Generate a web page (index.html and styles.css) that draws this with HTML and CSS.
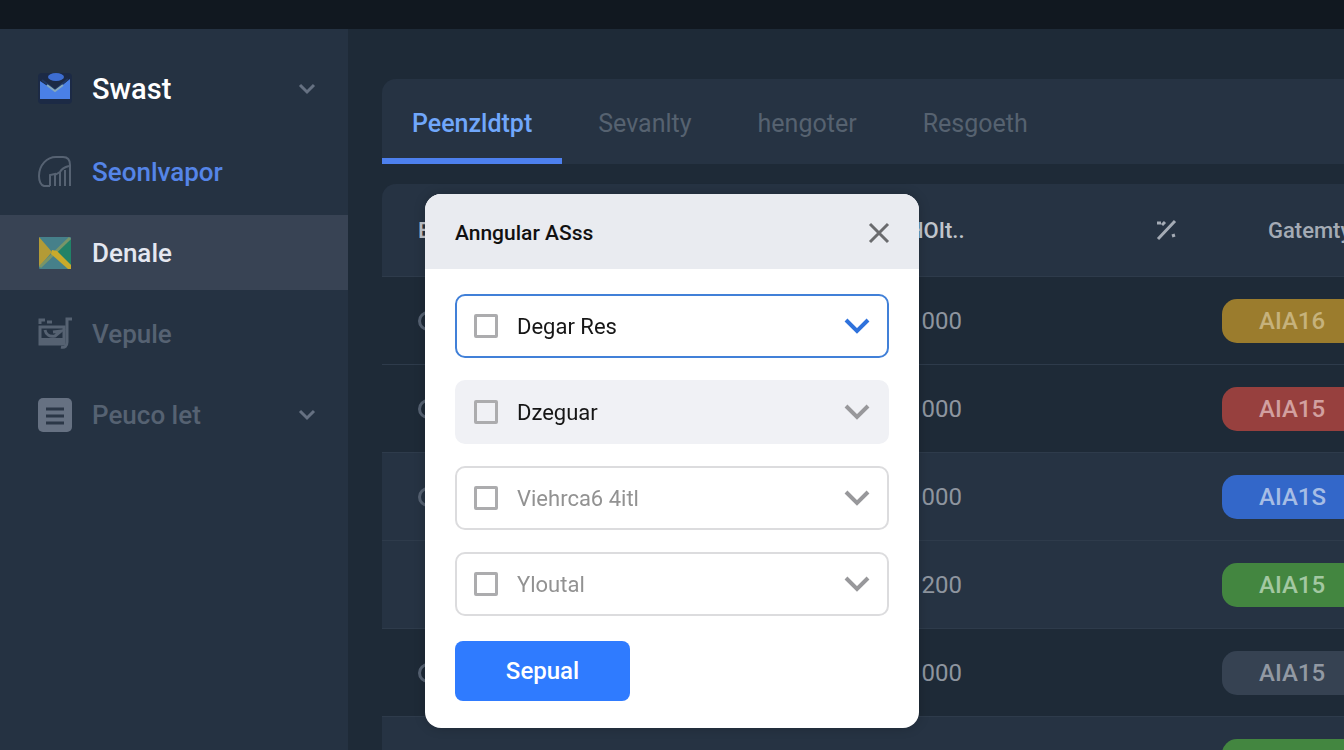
FILE: index.html
```html
<!DOCTYPE html>
<html lang="en">
<head>
    <meta charset="UTF-8">
    <meta name="viewport" content="width=device-width, initial-scale=1">
    <title>Denale</title>
    <link rel="stylesheet" href="styles.css">
</head>
<body>
    <header class="topbar"></header>

    <div class="layout">
        <nav class="sidebar">
            <a href="#" class="nav-item brand">
                <svg class="nav-icon" viewBox="0 0 34 34">
                    <rect x="0" y="1" width="34" height="31" rx="4" fill="#1c2a45"/>
                    <ellipse cx="18" cy="5" rx="8" ry="4" fill="#3d6dd0"/>
                    <path d="M2 9l15 10L32 7v20H2z" fill="#4a80e6"/>
                    <path d="M4 8l13 10L30 7" fill="none" stroke="#203763" stroke-width="2"/>
                    <path d="M9 13l8 6 8-6" fill="none" stroke="#86a9bd" stroke-width="2"/>
                </svg>
                <span>Swast</span>
                <svg class="nav-chevron" viewBox="0 0 18 18"><path d="M2 5l7 7 7-7"/></svg>
            </a>
            <a href="#" class="nav-item link">
                <svg class="nav-icon outline" viewBox="0 0 34 34">
                    <path d="M12 31H6C3 30 1 26 1 21 1 10 9 2 18 2h7c5 0 7 3 7 8v21"/>
                    <path d="M12 31V20l5-1v12M17 20l5-3v14M22 17c2-4 5-5 9-6M27 31V15"/>
                </svg>
                <span>Seonlvapor</span>
            </a>
            <a href="#" class="nav-item active">
                <svg class="nav-icon" viewBox="0 0 34 34">
                    <rect x="1" y="1" width="32" height="32" rx="1" fill="#46808a"/>
                    <path d="M1 1l13 15L1 31z" fill="#b39b36"/>
                    <path d="M33 3v26L19 16z" fill="#218267"/>
                    <path d="M2 31L32 2" stroke="#789568" stroke-width="3"/>
                    <path d="M14 14l5 1 14 14v4h-3L13 18z" fill="#c9aa2b"/>
                </svg>
                <span>Denale</span>
            </a>
            <a href="#" class="nav-item">
                <svg class="nav-icon" viewBox="0 0 34 34" fill="none" stroke="#566272">
                    <path d="M2 7V3h5M9 5h5" stroke-width="3"/>
                    <path d="M2 10h24v17H2z" stroke-width="3"/>
                    <path d="M2 24h24" stroke-width="6"/>
                    <path d="M7 13c1 5 5 7 10 6l6-5-8 1" stroke-width="3"/>
                    <path d="M34 2h-5v23c0 4-2 6-6 5" stroke-width="3"/>
                </svg>
                <span>Vepule</span>
            </a>
            <a href="#" class="nav-item">
                <svg class="nav-icon" viewBox="0 0 34 34">
                    <rect width="34" height="34" rx="5" fill="#667182"/>
                    <path d="M8 11h18M8 18h18M8 25h18" stroke="#2b3747" stroke-width="3"/>
                </svg>
                <span>Peuco let</span>
                <svg class="nav-chevron" viewBox="0 0 18 18"><path d="M2 5l7 7 7-7"/></svg>
            </a>
        </nav>

        <main class="content">
            <div class="tabs">
                <a href="#" class="tab selected">Peenzldtpt</a>
                <a href="#" class="tab">Sevanlty</a>
                <a href="#" class="tab">hengoter</a>
                <a href="#" class="tab">Resgoeth</a>
            </div>

            <table class="data">
                <colgroup>
                    <col class="col-name">
                    <col class="col-value">
                    <col class="col-percent">
                    <col class="col-status">
                </colgroup>
                <thead>
                    <tr>
                        <th>E</th>
                        <th>HOIt..</th>
                        <th class="percent">
                            <svg width="22" height="22" viewBox="0 0 22 22"><path d="M2 20L19 2M1 4h4M9 3L6 6M16 17l3-1"/></svg>
                        </th>
                        <th class="status">Gatemty</th>
                    </tr>
                </thead>
                <tbody>
                    <tr>
                        <td><i class="dot"></i></td>
                        <td>1000</td>
                        <td></td>
                        <td><span class="badge yellow">AIA16</span></td>
                    </tr>
                    <tr>
                        <td><i class="dot"></i></td>
                        <td>1000</td>
                        <td></td>
                        <td><span class="badge red">AIA15</span></td>
                    </tr>
                    <tr class="light">
                        <td><i class="dot"></i></td>
                        <td>1000</td>
                        <td></td>
                        <td><span class="badge blue">AIA1S</span></td>
                    </tr>
                    <tr class="light">
                        <td></td>
                        <td>1200</td>
                        <td></td>
                        <td><span class="badge green">AIA15</span></td>
                    </tr>
                    <tr>
                        <td><i class="dot"></i></td>
                        <td>1000</td>
                        <td></td>
                        <td><span class="badge gray">AIA15</span></td>
                    </tr>
                    <tr class="light">
                        <td></td>
                        <td></td>
                        <td></td>
                        <td><span class="badge green"></span></td>
                    </tr>
                </tbody>
            </table>
        </main>
    </div>

    <div class="overlay">
        <form class="modal" role="dialog" aria-labelledby="modal-title">
            <div class="modal-header">
                <h2 id="modal-title">Anngular ASss</h2>
                <button type="button" class="close" aria-label="Close">
                    <svg width="22" height="22" viewBox="0 0 22 22"><path d="M2 2l18 18M20 2L2 20"/></svg>
                </button>
            </div>
            <div class="modal-body">
                <div class="field focused">
                    <input type="checkbox" aria-label="Degar Res">
                    <select aria-label="Degar Res options"><option>Degar Res</option></select>
                    <svg class="arrow" viewBox="0 0 26 16"><path d="M2 2l11 11L24 2"/></svg>
                </div>
                <div class="field filled">
                    <input type="checkbox" aria-label="Dzeguar">
                    <select aria-label="Dzeguar options"><option>Dzeguar</option></select>
                    <svg class="arrow" viewBox="0 0 26 16"><path d="M2 2l11 11L24 2"/></svg>
                </div>
                <div class="field">
                    <input type="checkbox" aria-label="Viehrca6 4itl">
                    <select aria-label="Viehrca6 4itl options"><option>Viehrca6 4itl</option></select>
                    <svg class="arrow" viewBox="0 0 26 16"><path d="M2 2l11 11L24 2"/></svg>
                </div>
                <div class="field">
                    <input type="checkbox" aria-label="Yloutal">
                    <select aria-label="Yloutal options"><option>Yloutal</option></select>
                    <svg class="arrow" viewBox="0 0 26 16"><path d="M2 2l11 11L24 2"/></svg>
                </div>
                <button type="submit" class="submit">Sepual</button>
            </div>
        </form>
    </div>
</body>
</html>
```
FILE: styles.css
```css
* {
    box-sizing: border-box;
}

body {
    margin: 0;
    height: 100vh;
    overflow: hidden;
    display: flex;
    flex-direction: column;
    background-color: #1e2a37;
    font-family: Roboto, Arial, sans-serif;
    font-size: 24px;
}

.topbar {
    flex: none;
    height: 29px;
    background-color: #111820;
}

.layout {
    flex: 1;
    display: flex;
    min-height: 0;
}

/* sidebar */
.sidebar {
    flex: none;
    width: 348px;
    padding-top: 24px;
    display: flex;
    flex-direction: column;
    gap: 6px;
    background-color: #253242;
}

.nav-item {
    display: flex;
    align-items: center;
    gap: 20px;
    height: 75px;
    padding: 0 32px 0 38px;
    color: #566272;
    font-size: 26px;
    font-weight: 500;
    text-decoration: none;
}

.nav-item.brand {
    padding-bottom: 4px;
    color: #fff;
    font-size: 29px;
}

.nav-item.link {
    color: #5585e8;
}

.nav-item.active {
    background-color: #384354;
    color: #e4e7f0;
}

.nav-icon {
    width: 34px;
    height: 34px;
}

.nav-icon.outline {
    fill: none;
    stroke: #566272;
    stroke-width: 2;
}

.nav-chevron {
    width: 18px;
    height: 18px;
    margin-left: auto;
    fill: none;
    stroke: #667182;
    stroke-width: 3;
}

/* content */
.content {
    flex: 1;
    min-width: 0;
    padding: 50px 0 0 34px;
    overflow: hidden;
}

.tabs {
    display: flex;
    gap: 6px;
    height: 85px;
    margin-bottom: 20px;
    background-color: #263343;
    border-radius: 14px 0 0 0;
}

.tab {
    padding: 0 30px;
    line-height: 90px;
    color: #566270;
    font-size: 25px;
    text-decoration: none;
}

.tab.selected {
    border-bottom: 6px solid #4d80ee;
    color: #70a7fb;
    font-weight: 500;
}

.data {
    width: 1040px;
    table-layout: fixed;
    border-collapse: separate;
    border-spacing: 0;
    color: #8e959f;
}

.col-name {
    width: 490px;
}

.col-value {
    width: 248px;
}

.col-percent {
    width: 66px;
}

.data th,
.data td {
    height: 88px;
    padding: 0 0 0 36px;
    text-align: left;
    border-bottom: 1px solid #2e3b4b;
}

.data th {
    height: 93px;
    background-color: #263343;
    color: #c0c5cc;
    font-size: 22px;
    font-weight: 500;
}

.data th:first-child {
    border-radius: 14px 0 0 0;
}

.data .light td {
    background-color: #263343;
}

.data th.status {
    padding-left: 82px;
    color: #a4abb5;
}

.percent svg {
    display: block;
    fill: none;
    stroke: #a4abb5;
    stroke-width: 3;
}

.dot {
    display: block;
    width: 20px;
    height: 20px;
    border: 3px solid #566272;
    border-radius: 50%;
}

.data td:last-child {
    padding-left: 36px;
}

.badge {
    display: block;
    width: 140px;
    height: 44px;
    padding-left: 37px;
    border-radius: 15px;
    line-height: 44px;
    font-weight: 500;
}

.yellow {
    background-color: #9b7c2d;
    color: #c6b27c;
}

.red {
    background-color: #97403e;
    color: #d2a0a0;
}

.blue {
    background-color: #3367c9;
    color: #a6bde5;
}

.green {
    background-color: #438640;
    color: #a3c8a2;
}

.gray {
    background-color: #364252;
    color: #9299a3;
}

/* modal */
.overlay {
    position: fixed;
    inset: 0;
    padding-top: 194px;
    display: flex;
    justify-content: center;
    align-items: flex-start;
}

.modal {
    width: 494px;
    border-radius: 16px;
    overflow: hidden;
    background-color: #fff;
    box-shadow: 0 0 12px rgba(0, 0, 0, 0.2);
}

.modal-header {
    display: flex;
    justify-content: space-between;
    align-items: center;
    height: 75px;
    padding: 2px 29px 0 30px;
    background-color: #e9ebf0;
}

.modal-header h2 {
    margin: 0;
    color: #111;
    font-size: 21px;
    font-weight: 500;
}

.close {
    display: flex;
    padding: 0;
    border: none;
    background: none;
    fill: none;
    stroke: #6a6b6e;
    stroke-width: 3;
    cursor: pointer;
}

.modal-body {
    display: flex;
    flex-direction: column;
    align-items: flex-start;
    gap: 22px;
    padding: 25px 30px 27px;
}

.field {
    position: relative;
    display: flex;
    align-items: center;
    width: 100%;
    height: 64px;
    padding-left: 17px;
    border: 2px solid #dcdcde;
    border-radius: 10px;
    color: #929292;
}

.field input {
    appearance: none;
    flex: none;
    width: 24px;
    height: 24px;
    margin: 0;
    border: 3px solid #acacae;
    border-radius: 2px;
}

.field select {
    appearance: none;
    flex: 1;
    height: 100%;
    padding: 0 0 0 19px;
    border: none;
    outline: none;
    background: none;
    color: inherit;
    font: inherit;
    font-size: 22px;
}

/* drop-down arrow lies over the select */
.arrow {
    position: absolute;
    right: 17px;
    width: 26px;
    height: 16px;
    fill: none;
    stroke: #98989b;
    stroke-width: 4;
    pointer-events: none;
}

.field.focused {
    border-color: #4180d8;
    color: #161616;
}

.field.focused .arrow {
    stroke: #2f72dc;
}

.field.filled {
    border-color: #f0f1f5;
    background-color: #f0f1f5;
    color: #161616;
}

.submit {
    width: 175px;
    height: 60px;
    margin-top: 3px;
    border: none;
    border-radius: 8px;
    background-color: #2f7bff;
    color: #fff;
    font: 500 24px Roboto, Arial, sans-serif;
    cursor: pointer;
}
```
